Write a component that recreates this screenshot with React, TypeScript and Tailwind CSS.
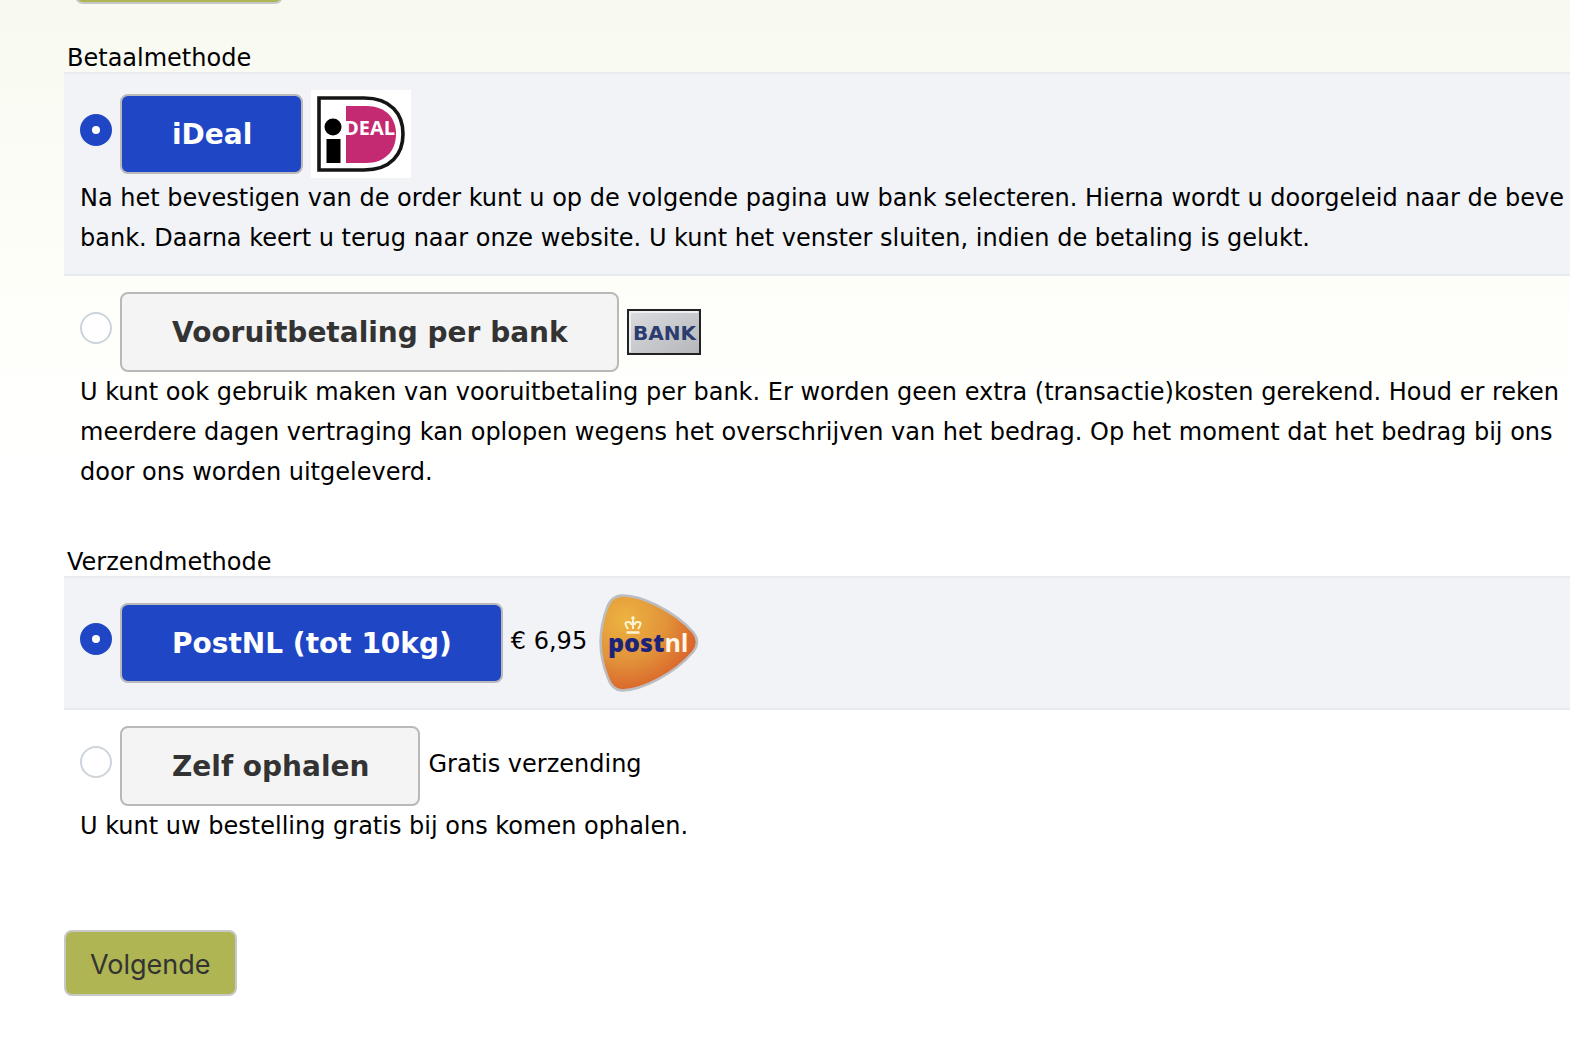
import React from "react";

type Option = {
  id: string;
  title: string;
  note?: string;
  logo?: React.ReactNode;
  lines?: string[];
};

function IdealLogo() {
  return (
    <svg role="img" aria-label="iDEAL" viewBox="0 0 100 88" className="h-[88px] w-[100px] shrink-0">
      <rect width="100" height="88" fill="#fff" />
      <path d="M8 8H53C80 8 92 24 92 44S80 80 53 80H8Z" fill="#fff" stroke="#151515" strokeWidth="3.600" />
      <path d="M35 16H55C75 16 85 28 85 44S75 73 55 73H35Z" fill="#c42a72" />
      <circle cx="22" cy="37" r="8.500" fill="#000" />
      <rect x="15.500" y="49" width="14" height="24" fill="#000" />
      <text x="33" y="44.500" fontFamily="Open Sans, sans-serif" fontWeight="700" fontSize="20" fill="#fff">
        DEAL
      </text>
    </svg>
  );
}

function BankLogo() {
  return (
    <svg role="img" aria-label="Bank" viewBox="0 0 74 46" className="h-[46px] w-[74px] shrink-0">
      <defs>
        <linearGradient id="bank-face" x1="0" y1="0" x2="1" y2="1">
          <stop offset="0" stopColor="#dcdde0" />
          <stop offset="1" stopColor="#b4b6ba" />
        </linearGradient>
      </defs>
      <rect x="1" y="1" width="72" height="44" fill="url(#bank-face)" stroke="#222" strokeWidth="2" />
      <path d="M3 43V3H71" fill="none" stroke="#eeeff1" strokeWidth="2" />
      <text x="6" y="31" fontFamily="DejaVu Sans, sans-serif" fontWeight="700" fontSize="20" fill="#2b3c6e">
        BANK
      </text>
    </svg>
  );
}

function PostNlLogo() {
  return (
    <svg role="img" aria-label="PostNL" viewBox="0 0 100 98" className="h-[98px] w-[100px] shrink-0">
      <defs>
        <radialGradient id="postnl-face" cx="0.25" cy="0.25" r="0.85">
          <stop offset="0" stopColor="#ecb340" />
          <stop offset="0.5" stopColor="#e2943a" />
          <stop offset="1" stopColor="#d85a28" />
        </radialGradient>
      </defs>
      <path
        d="M23 1.500C42 1 75 17 94 38Q102 48 94 58C75 80 43 96 23 96.500Q13 96 9 84C-1 60 -1 38 8 14Q12 2 23 1.500Z"
        fill="url(#postnl-face)"
        stroke="#bcbdc0"
        strokeWidth="2.500"
      />
      <g fill="none" stroke="#fff3d0" strokeWidth="2">
        <path d="M29 35Q24 28 29 28Q33 28 32 31M39 35Q44 28 39 28Q35 28 36 31M34 35V24" />
        <path d="M27.500 38.500H40.500" strokeWidth="2.500" />
      </g>
      <circle cx="34" cy="24" r="1.800" fill="#fff3d0" />
      <text x="9" y="57.500" fontFamily="Open Sans, sans-serif" fontWeight="800" fontSize="25" fill="#1b2479">
        post<tspan fill="#fff6e6" fontWeight="700">nl</tspan>
      </text>
    </svg>
  );
}

const payment: Option[] = [
  {
    id: "ideal",
    title: "iDeal",
    logo: <IdealLogo />,
    lines: [
      "Na het bevestigen van de order kunt u op de volgende pagina uw bank selecteren. Hierna wordt u doorgeleid naar de beve",
      "bank. Daarna keert u terug naar onze website. U kunt het venster sluiten, indien de betaling is gelukt.",
    ],
  },
  {
    id: "bank",
    title: "Vooruitbetaling per bank",
    logo: <BankLogo />,
    lines: [
      "U kunt ook gebruik maken van vooruitbetaling per bank. Er worden geen extra (transactie)kosten gerekend. Houd er reken",
      "meerdere dagen vertraging kan oplopen wegens het overschrijven van het bedrag. Op het moment dat het bedrag bij ons",
      "door ons worden uitgeleverd.",
    ],
  },
];

const shipping: Option[] = [
  { id: "postnl", title: "PostNL (tot 10kg)", note: "€ 6,95", logo: <PostNlLogo /> },
  {
    id: "pickup",
    title: "Zelf ophalen",
    note: "Gratis verzending",
    lines: ["U kunt uw bestelling gratis bij ons komen ophalen."],
  },
];

function OptionGroup({ name, legend, options }: { name: string; legend: string; options: Option[] }) {
  return (
    <fieldset className="min-w-0">
      <legend className="pt-0.5 pl-[3px] leading-7">{legend}</legend>
      {options.map((option, index) => (
        <div
          key={option.id}
          className="border-b-2 border-transparent py-4 pl-4 first-of-type:border-t-2 has-checked:border-[#e7eaee] has-checked:bg-[#f1f3f7]"
        >
          <div className="flex items-center gap-2">
            <input
              type="radio"
              id={option.id}
              name={name}
              defaultChecked={index === 0}
              className="peer mb-2 size-8 shrink-0 appearance-none rounded-full border-2 border-[#cdd4dc] bg-white checked:border-12 checked:border-[#1f46c5]"
            />
            <label
              htmlFor={option.id}
              className="h-20 cursor-pointer rounded-lg border-2 border-[#b9b9b9] bg-[#f4f4f4] pr-[49px] pl-[50px] text-[28px] leading-[78px] font-bold whitespace-nowrap text-[#333] peer-checked:bg-[#1f46c5] peer-checked:text-white"
            >
              {option.title}
            </label>
            {option.note && <span className="mb-1 pr-1 whitespace-nowrap">{option.note}</span>}
            {option.logo}
          </div>
          {option.lines && (
            <p className="leading-10 whitespace-nowrap">
              {option.lines.map((line) => (
                <span key={line} className="block">
                  {line}
                </span>
              ))}
            </p>
          )}
        </div>
      ))}
    </fieldset>
  );
}

export default function App() {
  return (
    <main className="min-h-screen overflow-hidden bg-white bg-linear-to-b from-[#f8f9f0] via-[#fefef9] via-[280px] to-white to-[480px] pl-16 font-['Verdana','DejaVu_Sans',sans-serif] text-2xl text-black">
      <div className="flex h-1 items-end overflow-hidden pl-[11px]">
        <button
          type="button"
          aria-label="Vorige stap"
          className="h-16 w-[208px] shrink-0 rounded-lg border-2 border-[#c8c8c8] bg-[#aeb552]"
        />
      </div>
      <form className="pt-[38px]" onSubmit={(event) => event.preventDefault()}>
        <OptionGroup name="payment" legend="Betaalmethode" options={payment} />
        <div className="pt-9">
          <OptionGroup name="shipping" legend="Verzendmethode" options={shipping} />
        </div>
        <button
          type="submit"
          className="mt-[66px] h-[66px] rounded-lg border-2 border-[#c8c8c8] bg-[#aeb552] px-6 pt-1 font-['Inter',sans-serif] text-[27px] text-[#333]"
        >
          Volgende
        </button>
      </form>
    </main>
  );
}
